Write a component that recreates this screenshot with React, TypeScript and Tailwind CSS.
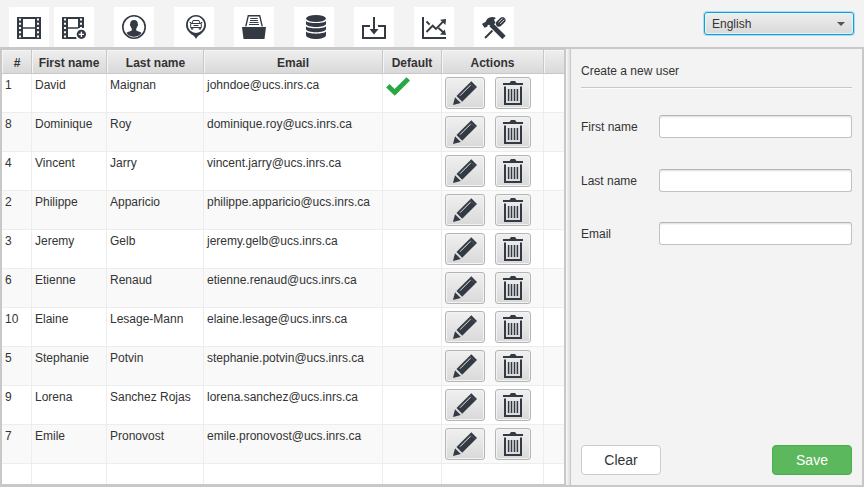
import React from "react";

const INK = "#343a43";

function FilmStrip({ plus = false }: { plus?: boolean }) {
  const holes = [3.6, 7.8, 12, 16.2, 20.4];
  const width = plus ? 22 : 24;
  return (
    <svg width="24" height="24" viewBox="0 0 24 24" className="block">
      <path d={`M0 2h${width}v22H0z`} fill={INK} />
      <path d={`M6 4h${width - 12}v8.300H6zM6 13.700h${width - 12}v8.300H6z`} fill="#fff" />
      {holes.map((y) => (
        <path key={y} d={`M2 ${y}h2v2h-2zM${width - 4} ${y}h2v2h-2z`} fill="#fff" />
      ))}
      {plus && (
        <>
          <path d="M14.500 24v-7l2-4H24v11z" fill="#fff" />
          <circle cx="19.400" cy="19.300" r="6" fill="#fff" />
          <circle cx="19.400" cy="19.300" r="4.600" fill={INK} />
          <path d="M16.800 19.300H22M19.400 16.700v5.200" stroke="#fff" strokeWidth="1.300" />
        </>
      )}
    </svg>
  );
}

function Profile() {
  return (
    <svg width="24" height="24" viewBox="0 0 24 24" className="block">
      <circle cx="12" cy="12" r="11.200" fill="none" stroke={INK} strokeWidth="1.600" />
      <path d="M12 5c-2.700 0-4 1.700-3.800 4.100-.6.3-.2 2 .5 2.300.2 1 .6 1.700 1.100 2.200v1.700c-.8 1-4 1.200-5.300 2.600A9.700 9.700 0 0 0 12 21.800a9.700 9.700 0 0 0 7.500-3.900c-1.300-1.400-4.500-1.600-5.300-2.600v-1.700c.5-.5.9-1.200 1.100-2.200.7-.3 1.100-2 .5-2.300C16 6.700 14.700 5 12 5z" fill={INK} />
    </svg>
  );
}

function CarPin() {
  return (
    <svg width="24" height="24" viewBox="0 0 24 24" className="block">
      <path d="M12 0C6.500 0 2 4.400 2 9.900c0 5.100 4.100 8.400 6.600 10.100 1.500 1 2.600 2.400 3.400 4 .8-1.600 1.900-3 3.400-4 2.500-1.700 6.600-5 6.600-10.100C22 4.400 17.500 0 12 0z" fill={INK} />
      <circle cx="12" cy="9.700" r="8.200" fill="#fff" />
      <path d="M8 8.500l1-3h6l1 3M6.700 8.500h10.600v4H6.700zM7.300 12.500v1.700h1.500v-1.700M15.200 12.500v1.700h1.500v-1.700M5.600 7.500h1.600M18.400 7.500h-1.600M9.500 10.500h5" fill="none" stroke={INK} strokeWidth="1" />
    </svg>
  );
}

function Archive() {
  return (
    <svg width="24" height="24" viewBox="0 0 24 24" className="block">
      <path d="M3.800 11.300L6.300.7h11.400l2.500 10.600" fill="none" stroke={INK} strokeWidth="1.400" />
      <path d="M8.300 3.500h7.400M8 5.500h8M7.500 7.500h9M7 9.500h10" stroke={INK} strokeWidth="1" />
      <path d="M0 12h24l-1.500 12h-21z" fill={INK} />
    </svg>
  );
}

function Database() {
  return (
    <svg width="24" height="24" viewBox="0 0 24 24" className="block">
      <ellipse cx="12" cy="3.500" rx="10" ry="3.500" fill={INK} />
      <path d="M2 6c2 2.700 18 2.700 20 0v3c-1 4-19 4-20 0zM2 11.200c2 2.700 18 2.700 20 0v3c-1 4-19 4-20 0zM2 16.600c2 2.700 18 2.700 20 0v3.600c-1 5-19 5-20 0z" fill={INK} />
    </svg>
  );
}

function Download() {
  return (
    <svg width="24" height="24" viewBox="0 0 24 24" className="block">
      <path d="M8 11H1v12h22V11h-7M12 2v13" fill="none" stroke={INK} strokeWidth="2" />
      <path d="M7.500 14h9L12 19.500z" fill={INK} />
    </svg>
  );
}

function Chart() {
  return (
    <svg width="24" height="24" viewBox="0 0 24 24" className="block">
      <path d="M1 2v21h23" fill="none" stroke={INK} strokeWidth="2" />
      <path d="M4.500 17l6.200-6.300 3.300 3.200 7-7.200M4.500 6.500l3.200 3.200M16.500 13l5 4.500" fill="none" stroke={INK} strokeWidth="1.900" />
      <path d="M24 4l-.6 6-5.200-5.200zM24 20l-6-.5 4.800-5z" fill={INK} />
    </svg>
  );
}

function Tools() {
  return (
    <svg width="24" height="24" viewBox="0 0 24 24" className="block">
      <path d="M3 23l14-14" stroke={INK} strokeWidth="2" />
      <path d="M17 8.500l3.400-3.300" stroke={INK} strokeWidth="6.200" strokeLinecap="round" />
      <path d="M16.500 7.300l4.200-4.100M18 8.800l4.400-4.200" stroke="#fff" strokeWidth=".8" />
      <path d="M8.500 9l13 13.500" stroke="#fff" strokeWidth="6.400" />
      <path d="M9 9.500l13 13" stroke={INK} strokeWidth="4.600" />
      <path d="M0 9l2.500 3.700 2.700-1 .7-2 4.600 1 3-3-1.500-3 2-1.700C11 1.300 7.500 1.800 5 4.200c-.8.800-.7 2-1.600 2.700-.8.700-2 .8-3.400 2.100z" fill={INK} />
    </svg>
  );
}

function Pencil() {
  return (
    <svg width="24" height="24" viewBox="0 0 24 24" className="block">
      <path d="M2 16.200L0 24l7.800-2z" fill={INK} />
      <path d="M3.500 14.900L18.300.2 24 5.900 9.200 20.700z" fill={INK} />
      <path d="M7 14.700L17.500 4.200" stroke="#e9e9e9" strokeWidth="1" />
      <path d="M16.700 2l5.500 5.500" stroke="#e9e9e9" strokeOpacity=".3" strokeWidth=".5" />
    </svg>
  );
}

function Trash() {
  return (
    <svg width="20" height="24" viewBox="0 0 20 24" className="block">
      <path d="M0 2h6.500l1.500-2h4l1.500 2H20v2H0z" fill={INK} />
      <path d="M2 5.500V23h16V5.500" fill="none" stroke={INK} strokeWidth="2" />
      <path d="M5.600 8v12M8.500 8v12M11.500 8v12M14.400 8v12" stroke={INK} strokeWidth="1.500" />
    </svg>
  );
}

const tools = [
  { icon: <FilmStrip />, place: "ml-[9px]" },
  { icon: <FilmStrip plus />, place: "ml-[5px]" },
  { icon: <Profile />, place: "ml-5" },
  { icon: <CarPin />, place: "ml-5 pl-1" },
  { icon: <Archive />, place: "ml-5" },
  { icon: <Database />, place: "ml-5 pl-1" },
  { icon: <Download />, place: "ml-5" },
  { icon: <Chart />, place: "ml-5" },
  { icon: <Tools />, place: "ml-5" },
];

const users = [
  [1, "David", "Maignan", "johndoe@ucs.inrs.ca"],
  [8, "Dominique", "Roy", "dominique.roy@ucs.inrs.ca"],
  [4, "Vincent", "Jarry", "vincent.jarry@ucs.inrs.ca"],
  [2, "Philippe", "Apparicio", "philippe.apparicio@ucs.inrs.ca"],
  [3, "Jeremy", "Gelb", "jeremy.gelb@ucs.inrs.ca"],
  [6, "Etienne", "Renaud", "etienne.renaud@ucs.inrs.ca"],
  [10, "Elaine", "Lesage-Mann", "elaine.lesage@ucs.inrs.ca"],
  [5, "Stephanie", "Potvin", "stephanie.potvin@ucs.inrs.ca"],
  [9, "Lorena", "Sanchez Rojas", "lorena.sanchez@ucs.inrs.ca"],
  [7, "Emile", "Pronovost", "emile.pronovost@ucs.inrs.ca"],
];

const columns = "grid grid-cols-[30px_75px_97px_179px_59px_102px_20px]";
const headers = [
  { text: "#", pad: "pl-px" },
  { text: "First name", pad: "" },
  { text: "Last name", pad: "pl-px" },
  { text: "Email", pad: "" },
  { text: "Default", pad: "" },
  { text: "Actions", pad: "" },
  { text: "", pad: "" },
];
const cell = "border-r border-[#ededed] pl-[3px] pt-1 leading-[14px] whitespace-nowrap";
const actionButton =
  "flex h-8 items-center justify-center rounded-[3px] border border-[#b5b5b5] bg-linear-to-b from-[#f0f0f0] to-[#d9d9d9] shadow-[inset_0_0_0_1px_#f3f3f3]";

function Field({ label, gap }: { label: string; gap: string }) {
  return (
    <label className={`flex h-[23px] items-center ${gap}`}>
      <span className="w-[78px] leading-[14px]">{label}</span>
      <input className="h-[23px] w-[193px] rounded-[3px] border border-[#c2c2c2] border-t-[#b5b5b5] bg-white px-2 shadow-[inset_0_2px_2px_-1px_#dcdcdc] outline-none" />
    </label>
  );
}

export default function App() {
  return (
    <div className="flex h-[487px] w-[864px] flex-col overflow-hidden bg-[#f3f3f3] font-['Liberation_Sans',Arial,sans-serif] text-[12px] text-[#333]">
      <header className="flex h-[47px] shrink-0 justify-between">
        <nav className="flex pt-[7px]">
          {tools.map((t, i) => (
            <button key={i} className={`flex size-10 items-center justify-center bg-white ${t.place}`}>
              {t.icon}
            </button>
          ))}
        </nav>
        <button className="mt-3 mr-[10px] flex h-[23px] w-[150px] items-center justify-between rounded-[3px] border border-[#109fd2] bg-linear-to-b from-[#eeeeee] to-[#d9d9d9] pr-2 pl-[7px] shadow-[0_0_0_1px_#a9dff1,inset_0_0_0_1px_#e8f3f7]">
          <span className="leading-[14px]">English</span>
          <svg width="8" height="4" viewBox="0 0 8 4" className="block">
            <path d="M0 0h8L4 4z" fill="#555" />
          </svg>
        </button>
      </header>

      <div className="flex min-h-0 flex-1 border-t-2 border-r-2 border-b-2 border-[#c8c8c8]">
        <section className="flex w-[566px] flex-col border-t border-r-2 border-b border-l-2 border-[#c8c8c8] bg-white">
          <div className={`${columns} h-6 shrink-0 border-b border-[#c8c8c8] bg-linear-to-b from-[#efefef] to-[#d9d9d9] font-bold`}>
            {headers.map((h, i) => (
              <div
                key={i}
                className={`flex items-center justify-center pt-[3px] leading-[14px] shadow-[inset_1px_1px_0_#f5f5f5] ${h.pad} ${i < 6 ? "border-r border-[#c8c8c8]" : ""}`}
              >
                {h.text}
              </div>
            ))}
          </div>
          {users.map(([id, first, last, email], i) => (
            <div key={id} className={`${columns} h-[39px] shrink-0 border-b border-[#ededed] ${i % 2 ? "bg-[#f9f9f9]" : "bg-white"}`}>
              <div className={cell}>{id}</div>
              <div className={cell}>{first}</div>
              <div className={cell}>{last}</div>
              <div className={cell}>{email}</div>
              <div className={cell}>
                {i === 0 && (
                  <svg width="24" height="19" viewBox="0 0 24 19" className="-mt-px block">
                    <path d="M.2 10.500L3.500 7l5.100 4.900L20.500.2 24 3.500 8.800 18.800z" fill="#28a745" />
                  </svg>
                )}
              </div>
              <div className="flex gap-[10px] border-r border-[#ededed] pt-[3px] pl-[3px]">
                <button className={`${actionButton} w-10`}>
                  <Pencil />
                </button>
                <button className={`${actionButton} w-9`}>
                  <Trash />
                </button>
              </div>
              <div />
            </div>
          ))}
          <div className={`${columns} min-h-0 flex-1`}>
            {headers.map((_, i) => (
              <div key={i} className={i < 6 ? "border-r border-[#ededed]" : ""} />
            ))}
          </div>
        </section>

        <div className="w-[5px] border-r border-[#c8c8c8] bg-linear-to-r from-[#f8f8f8] to-[#dedede]" />

        <section className="flex flex-1 flex-col pr-[10px] pb-[10px] pl-[10px]">
          <h2 className="mt-[15px] border-b border-[#c8c8c8] pb-[9px] leading-[14px] shadow-[0_1px_0_#fbfbfb]">Create a new user</h2>
          <Field label="First name" gap="mt-[27px]" />
          <Field label="Last name" gap="mt-[31px]" />
          <Field label="Email" gap="mt-[30px]" />
          <div className="mt-auto flex justify-between text-[14px]">
            <button className="h-[30px] w-20 rounded-[4px] border border-[#ccc] bg-white">Clear</button>
            <button className="h-[30px] w-20 rounded-[4px] border border-[#4cae4c] bg-[#5cb85c] text-white">Save</button>
          </div>
        </section>
      </div>
    </div>
  );
}
